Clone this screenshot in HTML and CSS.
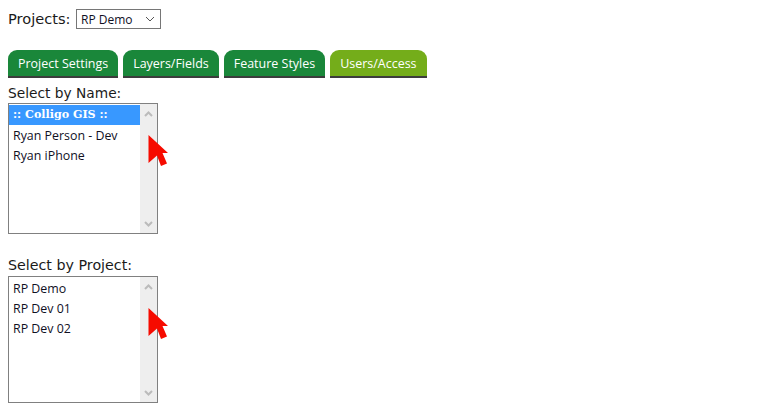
FILE: index.html
```html
<!DOCTYPE html>
<html lang="en">
<head>
    <meta charset="UTF-8">
    <meta name="viewport" content="width=device-width, initial-scale=1.0">
    <title>Users/Access</title>
    <link rel="stylesheet" href="styles.css">
</head>
<body>
    <div class="project-row">
        <span class="label">Projects:</span>
        <div class="dropdown">
            <span>RP Demo</span>
            <svg class="dropdown-arrow" width="10" height="6" viewBox="0 0 10 6"><path d="M1 1l4 4 4-4" fill="none" stroke="#555" stroke-width="1"/></svg>
        </div>
    </div>

    <div class="tabs">
        <div class="tab">Project Settings</div>
        <div class="tab">Layers/Fields</div>
        <div class="tab">Feature Styles</div>
        <div class="tab active">Users/Access</div>
    </div>

    <div class="picker picker-name">
        <div class="label">Select by Name:</div>
        <div class="listbox">
            <div class="options">
                <div class="option selected">:: Colligo GIS ::</div>
                <div class="option">Ryan Person - Dev</div>
                <div class="option">Ryan iPhone</div>
            </div>
            <div class="scrollbar">
                <svg width="9" height="6" viewBox="0 0 9 6"><path d="M1 5l3.5-3.5L8 5" fill="none" stroke="#bbb" stroke-width="2"/></svg>
                <svg width="9" height="6" viewBox="0 0 9 6"><path d="M1 1l3.5 3.5L8 1" fill="none" stroke="#bbb" stroke-width="2"/></svg>
            </div>
            <svg class="pointer" width="21" height="33" viewBox="0 0 21 33"><path d="M0.5 1V29L9 21.5 13 32 19 29.5 14.5 19H20Z" fill="#f60b00"/></svg>
        </div>
    </div>

    <div class="picker picker-project">
        <div class="label">Select by Project:</div>
        <div class="listbox short">
            <div class="options">
                <div class="option">RP Demo</div>
                <div class="option">RP Dev 01</div>
                <div class="option">RP Dev 02</div>
            </div>
            <div class="scrollbar">
                <svg width="9" height="6" viewBox="0 0 9 6"><path d="M1 5l3.5-3.5L8 5" fill="none" stroke="#bbb" stroke-width="2"/></svg>
                <svg width="9" height="6" viewBox="0 0 9 6"><path d="M1 1l3.5 3.5L8 1" fill="none" stroke="#bbb" stroke-width="2"/></svg>
            </div>
            <svg class="pointer" width="21" height="33" viewBox="0 0 21 33"><path d="M0.5 1V29L9 21.5 13 32 19 29.5 14.5 19H20Z" fill="#f60b00"/></svg>
        </div>
    </div>
</body>
</html>
```

FILE: styles.css
```css
body {
    margin: 0;
    padding: 9px 8px 0;
    font-family: "DejaVu Sans", Verdana, sans-serif;
    background-color: #fff;
    color: #1a1a1a;
    overflow: hidden;
}
.label {
    font-size: 14px;
    line-height: 18px;
}
.project-row {
    display: flex;
    align-items: center;
    gap: 6px;
    height: 20px;
}
.project-row .label {
    width: 62px;
    font-size: 14.6px;
    white-space: nowrap;
}
.dropdown {
    box-sizing: border-box;
    width: 85px;
    height: 20px;
    border: 1px solid #767676;
    padding: 0 5px 0 4px;
    display: flex;
    align-items: center;
    justify-content: space-between;
    font-family: "Open Sans", Tahoma, sans-serif;
    font-size: 12px;
    color: #10101f;
}
.tabs {
    display: flex;
    gap: 5px;
    margin-top: 21px;
}
.tab {
    box-sizing: border-box;
    height: 28px;
    padding: 0 10px;
    line-height: 27px;
    font-family: "Open Sans", Tahoma, sans-serif;
    font-size: 12.47px;
    color: #fff;
    background-color: #1a873a;
    border-bottom: 2px solid #3c3c3c;
    border-radius: 9px 9px 0 0;
}
.tab.active {
    background-color: #74ad1a;
}
.picker-name {
    margin-top: 7px;
}
.picker-project {
    margin-top: 24px;
}
.picker .label {
    height: 18px;
}
.picker-name .label {
    font-size: 13.75px;
    line-height: 16px;
}
.picker-project .label {
    font-size: 14.25px;
    line-height: 14px;
}
.listbox {
    position: relative;
    box-sizing: border-box;
    display: flex;
    width: 150px;
    height: 131px;
    border: 1px solid #808080;
}
.listbox.short {
    height: 127px;
}
.options {
    flex: 1;
    padding-top: 2px;
    font-family: "Open Sans", Tahoma, sans-serif;
    font-size: 12.4px;
    color: #10101f;
}
.option {
    height: 20px;
    line-height: 20px;
    padding-left: 4px;
}
.option.selected {
    margin-top: -1px;
    margin-bottom: 1px;
    background-color: #3898ff;
    color: #fff;
    font-family: "DejaVu Serif", serif;
    font-size: 11.1px;
    font-weight: bold;
}
.scrollbar {
    width: 17px;
    background-color: #eee;
    display: flex;
    flex-direction: column;
    justify-content: space-between;
    align-items: center;
    padding: 7px 0 6px;
    box-sizing: border-box;
}
.pointer {
    position: absolute;
    left: 139px;
    top: 30px;
}
```
